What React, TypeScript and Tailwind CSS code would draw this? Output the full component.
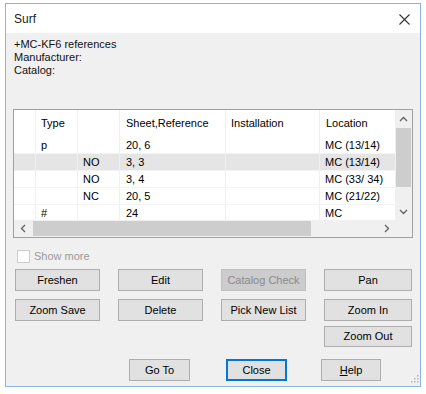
const rows = [
  { t: "p", c: "", s: "20, 6", loc: "MC (13/14)", sel: false },
  { t: "", c: "NO", s: "3, 3", loc: "MC (13/14)", sel: true },
  { t: "", c: "NO", s: "3, 4", loc: "MC (33/ 34)", sel: false },
  { t: "", c: "NC", s: "20, 5", loc: "MC (21/22)", sel: false },
  { t: "#", c: "", s: "24", loc: "MC", sel: false },
];

function Btn({ label, disabled, focus, className = "" }: { label: React.ReactNode; disabled?: boolean; focus?: boolean; className?: string }) {
  return (
    <div
      className={
        "flex items-center justify-center text-[11px] " +
        (disabled
          ? "bg-[#cccccc] border border-[#bfbfbf] text-[#8a8a8a] "
          : focus
          ? "bg-[#e1e1e1] border-2 border-[#0078d7] text-black "
          : "bg-[#e1e1e1] border border-[#adadad] text-black ") +
        className
      }
    >
      {label}
    </div>
  );
}

export default function App() {
  return (
    <div className="w-[426px] h-[394px] bg-white pt-[3px] pl-[5px] font-['Liberation_Sans',Arial,sans-serif]">
      <div className="w-[416px] h-[384px] border border-[#86b4e4] flex flex-col relative">
        {/* title bar */}
        <div className="h-[29px] bg-white flex items-center justify-between pl-[8px] pr-[10px]">
          <span className="text-[12px] text-[#222]">Surf</span>
          <svg width="11" height="11" viewBox="0 0 11 11" className="mt-[1px]">
            <path d="M0.5 0.5 L10.5 10.5 M10.5 0.5 L0.5 10.5" stroke="#333" strokeWidth="1.1" />
          </svg>
        </div>
        {/* body */}
        <div className="flex-1 bg-[#f0f0f0] flex flex-col">
          <div className="pl-[8px] pt-[5px] text-[11px] leading-[13px] text-[#111]">
            <div>+MC-KF6 references</div>
            <div>Manufacturer:</div>
            <div>Catalog:</div>
          </div>
          {/* list */}
          <div className="ml-[7px] mt-[32px] w-[400px] h-[129px] border border-[#a0a0a0] bg-white flex flex-col text-[11px] text-black">
            <div className="flex h-[110px]">
              <div className="w-[381px] overflow-hidden">
                <div className="flex h-[27px] items-center">
                  <div className="w-[22px] h-full border-r border-[#f0f0f0]" />
                  <div className="w-[42px] h-full border-r border-[#f0f0f0] flex items-center pl-[5px]">Type</div>
                  <div className="w-[42px] h-full border-r border-[#f0f0f0]" />
                  <div className="w-[106px] h-full border-r border-[#f0f0f0] flex items-center pl-[6px]">Sheet,Reference</div>
                  <div className="w-[94px] h-full border-r border-[#f0f0f0] flex items-center pl-[5px]">Installation</div>
                  <div className="w-[75px] h-full flex items-center pl-[6px]">Location</div>
                </div>
                {rows.map((r, i) => (
                  <div key={i} className={"flex h-[17px] items-center border-b border-[#f3f3f3] " + (r.sel ? "bg-[#e5e5e5]" : "")}>
                    <div className="w-[22px] h-full border-r border-[#f0f0f0]" />
                    <div className="w-[42px] h-full border-r border-[#f0f0f0] flex items-center pl-[5px]">{r.t}</div>
                    <div className="w-[42px] h-full border-r border-[#f0f0f0] flex items-center pl-[5px]">{r.c}</div>
                    <div className="w-[106px] h-full border-r border-[#f0f0f0] flex items-center pl-[6px]">{r.s}</div>
                    <div className="w-[94px] h-full border-r border-[#f0f0f0]" />
                    <div className="w-[75px] h-full flex items-center pl-[5px] whitespace-nowrap">{r.loc}</div>
                  </div>
                ))}
              </div>
              {/* vertical scrollbar */}
              <div className="w-[17px] h-full bg-[#f0f0f0] flex flex-col">
                <div className="h-[17px] flex items-center justify-center">
                  <svg width="9" height="6" viewBox="0 0 9 6"><path d="M1 5 L4.5 1.5 L8 5" stroke="#606060" strokeWidth="1.3" fill="none" /></svg>
                </div>
                <div className="flex-1 flex flex-col px-[1px]">
                  <div className="h-[1px]" />
                  <div className="h-[59px] bg-[#cdcdcd]" />
                </div>
                <div className="h-[17px] flex items-center justify-center">
                  <svg width="9" height="6" viewBox="0 0 9 6"><path d="M1 1 L4.5 4.5 L8 1" stroke="#606060" strokeWidth="1.3" fill="none" /></svg>
                </div>
              </div>
            </div>
            {/* horizontal scrollbar */}
            <div className="flex h-[17px]">
              <div className="w-[381px] bg-[#f0f0f0] flex items-center">
                <div className="w-[17px] h-full flex items-center justify-center">
                  <svg width="6" height="9" viewBox="0 0 6 9"><path d="M5 1 L1.5 4.5 L5 8" stroke="#606060" strokeWidth="1.3" fill="none" /></svg>
                </div>
                <div className="flex-1 h-full py-[1px] flex">
                  <div className="ml-[2px] w-[278px] h-full bg-[#cdcdcd]" />
                </div>
                <div className="w-[17px] h-full flex items-center justify-center">
                  <svg width="6" height="9" viewBox="0 0 6 9"><path d="M1 1 L4.5 4.5 L1 8" stroke="#606060" strokeWidth="1.3" fill="none" /></svg>
                </div>
              </div>
              <div className="w-[17px] bg-[#f0f0f0]" />
            </div>
          </div>
          {/* checkbox */}
          <div className="ml-[11px] mt-[12px] flex items-center gap-[4px] h-[13px]">
            <div className="w-[13px] h-[13px] border border-[#cccccc] bg-white" />
            <span className="text-[11px] text-[#9a9a9a]">Show more</span>
          </div>
          {/* buttons */}
          <div className="ml-[9px] mt-[6px] grid grid-cols-[85px_85px_85px_88px] gap-x-[18px] h-[22px]">
            <Btn label="Freshen" />
            <Btn label="Edit" />
            <Btn label="Catalog Check" disabled />
            <Btn label="Pan" />
          </div>
          <div className="ml-[9px] mt-[8px] grid grid-cols-[85px_85px_85px_88px] gap-x-[18px] h-[22px]">
            <Btn label="Zoom Save" />
            <Btn label="Delete" />
            <Btn label="Pick New List" />
            <Btn label="Zoom In" />
          </div>
          <div className="ml-[9px] mt-[5px] grid grid-cols-[85px_85px_85px_88px] gap-x-[18px] h-[21px]">
            <div />
            <div />
            <div />
            <Btn label="Zoom Out" />
          </div>
          <div className="mt-[12px] flex h-[22px] pl-[123px]">
            <Btn label="Go To" className="w-[61px]" />
            <Btn label="Close" focus className="w-[61px] ml-[36px]" />
            <Btn label={<span><span className="underline">H</span>elp</span>} className="w-[60px] ml-[34px]" />
          </div>
        </div>
        {/* resize grip */}
        <svg width="10" height="10" viewBox="0 0 10 10" className="absolute right-[1px] bottom-[1px]">
          <g fill="#b8b8b8">
            <rect x="8" y="0" width="1.5" height="1.5" />
            <rect x="5" y="3" width="1.5" height="1.5" />
            <rect x="8" y="3" width="1.5" height="1.5" />
            <rect x="2" y="6" width="1.5" height="1.5" />
            <rect x="5" y="6" width="1.5" height="1.5" />
            <rect x="8" y="6" width="1.5" height="1.5" />
          </g>
        </svg>
      </div>
    </div>
  );
}
